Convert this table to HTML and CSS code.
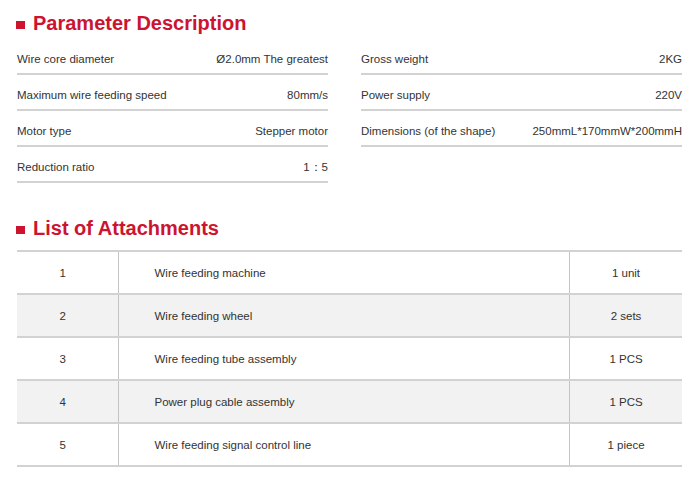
FILE: index.html
```html
<!DOCTYPE html>
<html>
<head>
<meta charset="utf-8">
<link rel="stylesheet" href="styles.css">
</head>
<body>
<div class="page">
  <h2 class="title"><span class="mark"></span>Parameter Description</h2>
  <div class="params">
    <div class="col col-left">
      <div class="row"><span>Wire core diameter</span><span>Ø2.0mm The greatest</span></div>
      <div class="row"><span>Maximum wire feeding speed</span><span>80mm/s</span></div>
      <div class="row"><span>Motor type</span><span>Stepper motor</span></div>
      <div class="row"><span>Reduction ratio</span><span>1：5</span></div>
    </div>
    <div class="col col-right">
      <div class="row"><span>Gross weight</span><span>2KG</span></div>
      <div class="row"><span>Power supply</span><span>220V</span></div>
      <div class="row"><span>Dimensions (of the shape)</span><span>250mmL*170mmW*200mmH</span></div>
    </div>
  </div>
  <h2 class="title title-2"><span class="mark"></span>List of Attachments</h2>
  <table class="att">
    <tr><td class="c1">1</td><td class="c2">Wire feeding machine</td><td class="c3">1 unit</td></tr>
    <tr class="alt"><td class="c1">2</td><td class="c2">Wire feeding wheel</td><td class="c3">2 sets</td></tr>
    <tr><td class="c1">3</td><td class="c2">Wire feeding tube assembly</td><td class="c3">1 PCS</td></tr>
    <tr class="alt"><td class="c1">4</td><td class="c2">Power plug cable assembly</td><td class="c3">1 PCS</td></tr>
    <tr><td class="c1">5</td><td class="c2">Wire feeding signal control line</td><td class="c3">1 piece</td></tr>
  </table>
</div>
</body>
</html>
```
FILE: styles.css
```css
html, body { margin: 0; padding: 0; background: #fff; }
body { font-family: "Liberation Sans", Arial, sans-serif; color: #333; font-size: 11.5px; }
.page { padding: 7px 17px 0 17px; width: 665px; }
.title {
  margin: 0;
  font-size: 20px;
  font-weight: bold;
  color: #cc1431;
  line-height: 28px;
  height: 31px;
  display: flex;
  align-items: center;
}
.params { display: flex; gap: 33px; padding-top: 1px; }
.mark { display: inline-block; width: 9px; height: 8px; background: #cc1431; margin: 5px 8px 0 -1px; }
.col-left { width: 311px; }
.col-right { width: 321px; }
.row {
  display: flex;
  justify-content: space-between;
  align-items: center;
  box-sizing: border-box;
  height: 36px;
  padding-top: 6px;
  border-bottom: 2px solid #d2d2d2;
}
.title-2 { margin-top: 29px; }
.att { border-collapse: collapse; width: 665px; margin-top: 7px; }
.att td { height: 41px; padding: 0; border-top: 2px solid #d2d2d2; border-bottom: 2px solid #d2d2d2; }
.att .c1 { width: 101px; text-align: center; padding-right: 9px; border-right: 1px solid #c4c4c4; box-sizing: border-box; }
.att .c2 { padding-left: 36px; border-right: 1px solid #c4c4c4; }
.att .c3 { width: 112px; text-align: center; }
.att .alt td { background: #f2f2f2; }
```
